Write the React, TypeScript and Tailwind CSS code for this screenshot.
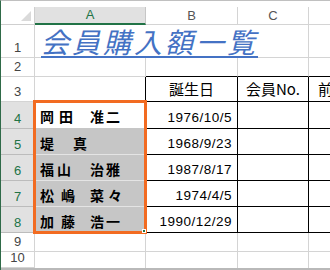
import React from "react";

const jp = { fontFamily: '"Noto Sans CJK JP", "Noto Sans", sans-serif' };
const lat = { fontFamily: '"Liberation Sans", Arial, sans-serif' };

const names: [string, number][][] = [
  [["岡", 19], ["田　", 31], ["准", 16], ["二", 16]],
  [["堤　", 33], ["真", 16]],
  [["福", 17], ["山　", 33], ["治", 16], ["雅", 16]],
  [["松", 21], ["嶋　", 29], ["菜", 18], ["々", 16]],
  [["加", 21], ["藤　", 29], ["浩", 16], ["一", 16]],
];
const dates = ["1976/10/5", "1968/9/23", "1987/8/17", "1974/4/5", "1990/12/29"];

function RowHead({ n, sel }: { n: number; sel?: boolean }) {
  return (
    <div
      className={
        "flex items-end justify-center pb-[1px] border-r border-b text-[13px] leading-none " +
        (sel
          ? "bg-[#e1e1e1] border-r-[#c6c6c6] border-b-[#bcbcbc] text-[#217346]"
          : "bg-white border-[#d4d4d4] text-[#444444]")
      }
      style={lat}
    >
      <span className="pb-[2px]">{n}</span>
    </div>
  );
}

export default function App() {
  return (
    <div className="relative w-[330px] h-[270px] overflow-hidden bg-white border-l border-l-[#2f6a48] border-t border-t-[#c0c0c0]">
      <div className="h-[6px]" />
      <div className="grid w-max grid-cols-[34px_111px_92px_71px_100px] grid-rows-[18px_33px_19px_25px_27px_26px_26px_26px_26px_19px_16px]">
        {/* header row */}
        <div className="flex items-end justify-end pr-[3px] pb-[3px] border-r border-b border-[#cfcfcf] bg-white">
          <svg width="10" height="10" viewBox="0 0 10 10">
            <polygon points="10,0 10,10 0,10" fill="#dadada" />
          </svg>
        </div>
        <div className="flex items-center justify-center bg-[#e1e1e1] border-r border-r-[#c6c6c6] border-b-2 border-b-[#217346] text-[13px] text-[#217346]" style={lat}>
          A
        </div>
        <div className="flex items-center justify-center bg-white border-r border-b border-[#d4d4d4] text-[13px] text-[#555555]" style={lat}>
          B
        </div>
        <div className="flex items-center justify-center bg-white border-r border-b border-[#d4d4d4] text-[13px] text-[#555555]" style={lat}>
          C
        </div>
        <div className="bg-white border-r border-b border-[#d4d4d4]" />

        {/* row 1 */}
        <RowHead n={1} />
        <div className="col-span-3 flex items-end pl-[6px] pb-[1px] border-r border-b border-[#d4d4d4] whitespace-nowrap">
          <span
            className="italic text-[28px] leading-[30px] tracking-[3px] text-[#4472c4] underline decoration-2 underline-offset-[3px]"
            style={jp}
          >
            会員購入額一覧
          </span>
        </div>
        <div className="border-r border-b border-[#d4d4d4]" />

        {/* row 2 */}
        <RowHead n={2} />
        <div className="border-r border-b border-[#d4d4d4]" />
        <div className="border-r border-b border-r-[#d4d4d4] border-b-black" />
        <div className="border-r border-b border-r-[#d4d4d4] border-b-black" />
        <div className="border-r border-b border-r-[#d4d4d4] border-b-black" />

        {/* row 3 */}
        <RowHead n={3} />
        <div className="border-r border-b border-r-black border-b-[#d4d4d4]" />
        <div className="flex items-center justify-center border-r border-b border-black text-[15px] text-black" style={jp}>
          誕生日
        </div>
        <div className="flex items-center justify-center border-r border-b border-black text-[15px] text-black" style={jp}>
          会員No.
        </div>
        <div className="flex items-center pl-[9px] border-r border-b border-black text-[15px] text-black whitespace-nowrap" style={jp}>
          前回購入額
        </div>

        {/* rows 4-8 */}
        {names.map((nm, i) => (
          <React.Fragment key={i}>
            <RowHead n={i + 4} sel />
            <div
              className={
                "flex items-center pl-[5px] pt-[3px] border-r border-b border-r-black text-[14px] font-bold text-black whitespace-nowrap " +
                (i === 0 ? "bg-white border-b-[#c6c6c6]" : "bg-[#c6c6c6] border-b-[#e4e4e4]")
              }
              style={jp}
            >
              {nm.map(([c, w], j) => (
                <span key={j} className="inline-block overflow-hidden" style={{ width: w }}>
                  {c}
                </span>
              ))}
            </div>
            <div
              className="flex items-end justify-end pr-[5px] pb-[2px] border-r border-b border-black text-[13.5px] leading-[16px] tracking-[0.5px] text-black"
              style={lat}
            >
              {dates[i]}
            </div>
            <div className="border-r border-b border-black" />
            <div className="border-r border-b border-black" />
          </React.Fragment>
        ))}

        {/* row 9-10 */}
        <RowHead n={9} />
        <div className="border-r border-b border-[#d4d4d4]" />
        <div className="border-r border-b border-[#d4d4d4]" />
        <div className="border-r border-b border-[#d4d4d4]" />
        <div className="border-r border-b border-[#d4d4d4]" />
        <RowHead n={10} />
        <div className="border-r border-[#d4d4d4]" />
        <div className="border-r border-[#d4d4d4]" />
        <div className="border-r border-[#d4d4d4]" />
        <div className="border-r border-[#d4d4d4]" />
      </div>
      <div className="h-[2px] bg-[#b9b9b9]" />

      {/* selection highlight */}
      <div className="absolute left-[32px] top-[99px] w-[114px] h-[134px] border-[3px] border-[#f26b21]" />
      <div className="absolute left-[141px] top-[228px] w-[4px] h-[4px] bg-[#217346] border border-white" />
    </div>
  );
}
